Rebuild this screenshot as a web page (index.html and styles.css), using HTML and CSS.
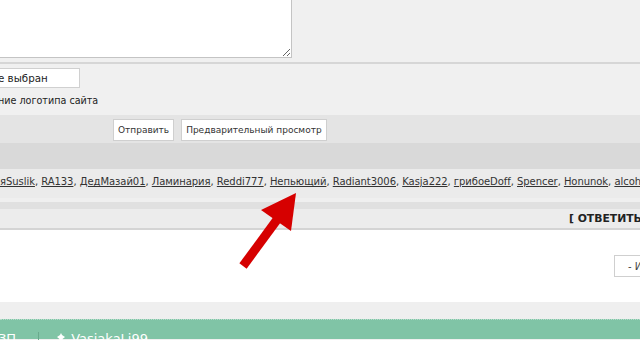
FILE: index.html
```html
<!DOCTYPE html>
<html lang="ru">
<head>
<meta charset="utf-8">
<link rel="stylesheet" href="styles.css">
</head>
<body>
<div class="page">
  <div class="editor"><textarea class="ta"></textarea></div>
  <div class="rule"></div>
  <div class="upload">
    <div class="file">е выбран</div>
    <div class="hint">ние логотипа сайта</div>
  </div>
  <div class="actions">
    <button class="btn">Отправить</button>
    <button class="btn">Предварительный просмотр</button>
  </div>
  <div class="band"></div>
  <div class="users"><a>яSuslik</a>, <a>RA133</a>, <a>ДедМазай01</a>, <a>Ламинария</a>, <a>Reddi777</a>, <a>Непьющий</a>, <a>Radiant3006</a>, <a>Kasja222</a>, <a>грибоеDoff</a>, <a>Spencer</a>, <a>Honunok</a>, <a>alcoholic</a></div>
  <div class="spacer"></div>
  <div class="band2"></div>
  <div class="replybar"><span class="reply">[ ОТВЕТИТЬ ]</span></div>
  <div class="post"><button class="quote">- Изменить</button></div>
  <div class="gap"></div>
  <div class="footer">
    <span class="f-left">ЗП</span>
    <span class="f-sep"></span>
    <span class="f-icon">
      <svg width="8" height="10" viewBox="0 0 8 10"><path d="M4 0 L5 2 L8 4 L5.5 6 L6 10 L4 8 L2 10 L2.5 6 L0 4 L3 2 Z" fill="#ffffff"/></svg>
    </span>
    <span class="f-name">VasiakaLi99</span>
  </div>
  <svg class="arrow" width="640" height="340" viewBox="0 0 640 340">
    <line x1="243" y1="266" x2="279" y2="217" stroke="#d60000" stroke-width="9" stroke-linecap="butt"/>
    <polygon points="296,193 261,210 291,231" fill="#d60000"/>
  </svg>
</div>
</body>
</html>
```

FILE: styles.css
```css
* { box-sizing: border-box; }
html, body { margin: 0; padding: 0; }
body {
  width: 640px;
  height: 340px;
  overflow: hidden;
  background: #f0f0f0;
  font-family: "DejaVu Sans", Verdana, sans-serif;
  font-size: 11px;
  color: #333;
}
.page {
  position: relative;
  width: 640px;
  height: 340px;
  overflow: hidden;
}
.editor {
  height: 62px;
}
.ta {
  display: block;
  width: 292px;
  height: 58px;
  margin: 0;
  border: 1px solid #c4c4c4;
  border-top: none;
  border-left: none;
  background: #fff;
  resize: both;
  outline: none;
}
.rule {
  height: 2px;
  background: #d6d6d6;
}
.upload {
  height: 51px;
  padding-top: 4px;
}
.file {
  width: 82px;
  height: 20px;
  background: #fff;
  border: 1px solid #d0d0d0;
  border-left: none;
  line-height: 18px;
  color: #222;
  font-size: 10.3px;
  margin-left: -2px;
}
.hint {
  margin-top: 7px;
  margin-left: -2px;
  color: #222;
  font-size: 9.6px;
}
.actions {
  height: 28px;
  background: #e4e4e4;
  display: flex;
  gap: 7px;
  padding: 4px 0 0 113px;
}
.btn {
  height: 22px;
  margin: 0;
  padding: 0 4px;
  background: #fff;
  border: 1px solid #cfcfcf;
  font-family: "DejaVu Sans", Verdana, sans-serif;
  font-size: 9px;
  color: #333;
}
.band {
  height: 26px;
  background: #d9d9d9;
}
.users {
  height: 29px;
  background: #ebebeb;
  white-space: nowrap;
  line-height: 26px;
  font-size: 10px;
  letter-spacing: -0.05px;
  color: #333;
}
.users a {
  text-decoration: underline;
  color: #333;
}
.spacer {
  height: 4px;
  background: #efefef;
}
.band2 {
  height: 7px;
  background: #e0e0e0;
}
.replybar {
  height: 21px;
  background: #ececec;
  border-bottom: 2px solid #d4d4d4;
  padding-left: 569px;
  white-space: nowrap;
  line-height: 19px;
}
.reply {
  font-weight: bold;
  color: #222;
  font-size: 10.8px;
}
.post {
  height: 72px;
  background: #fff;
  padding: 25px 0 0 614px;
  white-space: nowrap;
}
.quote {
  height: 22px;
  margin: 0;
  padding: 0 0 0 13px;
  background: #fff;
  border: 1px solid #cfcfcf;
  font-family: "DejaVu Sans", Verdana, sans-serif;
  font-size: 10px;
  color: #444;
  text-align: left;
}
.gap {
  height: 17px;
  background: #efefef;
}
.footer {
  height: 20px;
  background: #80c4a6;
  border-top: 1px dotted #b3dcc9;
  display: flex;
  align-items: flex-start;
  padding-top: 11px;
  color: #fff;
  font-size: 13px;
  white-space: nowrap;
}
.f-left {
  margin-left: -2px;
  line-height: 15px;
}
.f-sep {
  width: 1px;
  height: 20px;
  background: #6aaa8d;
  margin-left: 22px;
  margin-top: 1px;
}
.f-icon {
  margin-left: 18px;
  margin-top: 2px;
  display: flex;
}
.f-name {
  margin-left: 6px;
  line-height: 15px;
}
.arrow {
  position: absolute;
  left: 0;
  top: 0;
  pointer-events: none;
}
```
